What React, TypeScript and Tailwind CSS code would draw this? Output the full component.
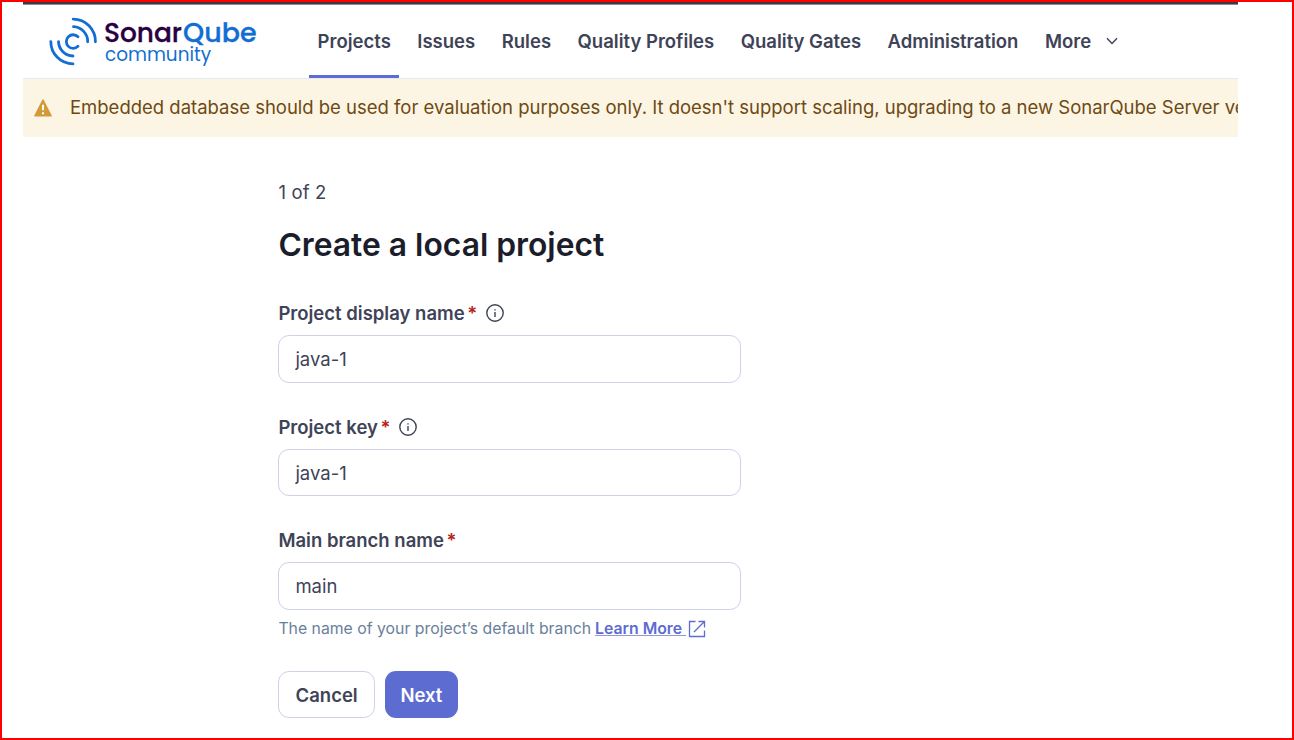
import type { ReactNode } from "react";

const navItems = ["Projects", "Issues", "Rules", "Quality Profiles", "Quality Gates", "Administration"];

function Logo() {
  return (
    <svg className="ml-[26px] mt-[7px] h-[62px] w-[210px] shrink-0 overflow-visible" viewBox="49 12 210 62" fill="none">
      <g stroke="#126ed3" strokeWidth="2.8" strokeLinecap="round">
        <path d="M78 36.8A6.8 6.8 0 1 0 78 46.3" />
        <path d="M73.5 26.7A14.9 14.9 0 0 1 87.7 41.8" />
        <path d="M73.2 19.1A22.4 22.4 0 0 1 95.4 41.8" />
        <path d="M58.5 41.6A14.9 14.9 0 0 0 73 56" />
        <path d="M50.8 41.6A22.2 22.2 0 0 0 73 63.9" />
      </g>
      <g fontFamily="Poppins, Inter, sans-serif">
        <text x="104" y="42.4" fontSize="26" fontWeight="500" fill="#290042" stroke="#290042" strokeWidth="0.3" textLength="78" lengthAdjust="spacingAndGlyphs">Sonar</text>
        <text x="183" y="42.4" fontSize="26" fontWeight="500" fill="#126ed3" stroke="#126ed3" strokeWidth="0.3" textLength="73.5" lengthAdjust="spacingAndGlyphs">Qube</text>
        <text x="105" y="60.5" fontSize="19" fill="#126ed3" textLength="106" lengthAdjust="spacingAndGlyphs">community</text>
      </g>
    </svg>
  );
}

function InfoIcon() {
  return (
    <svg className="ml-[9px] size-[18px]" viewBox="0 0 18 18" fill="none" stroke="#3e4357" strokeWidth="1.4">
      <circle cx="9" cy="9" r="8.2" />
      <path d="M9 8v5" />
      <path d="M9 5.2v1.4" />
    </svg>
  );
}

function Field({ label, value, info, children }: { label: string; value: string; info?: boolean; children?: ReactNode }) {
  return (
    <div className="flex flex-col">
      <label className="flex h-6 items-center font-semibold">
        <span>{label}</span>
        <span className="ml-[2.5px] text-[#b42318]">*</span>
        {info && <InfoIcon />}
      </label>
      <input
        className="mt-[10px] h-[47.5px] w-[462.6px] rounded-[11px] border border-[#ced2e8] bg-white px-4 outline-none"
        defaultValue={value}
      />
      {children}
    </div>
  );
}

export default function App() {
  return (
    <div className="h-[740px] w-[1294px] overflow-hidden border-2 border-[#ff0000] bg-white font-['Inter',sans-serif] text-[18.5px] leading-6 text-[#3e4357]">
      <div className="ml-[21px] flex w-[1215px] flex-col">
        <div className="h-[3px] border-b border-[#8c8c8c] bg-[#3c3c3c]" />
        <header className="flex h-[73.5px] border-b border-[#e6e9f0]">
          <Logo />
          <nav className="ml-[50.3px] flex gap-[10.5px] font-semibold">
            {navItems.map((item, i) => (
              <a
                key={item}
                className={
                  i === 0
                    ? "flex h-[73px] items-center border-b-[3px] border-[#5d6cd0] pr-[8px] pl-[8.3px] pt-[2px] whitespace-nowrap"
                    : "flex h-[73px] items-center border-b-[3px] border-transparent px-2 pt-[2px] whitespace-nowrap"
                }
              >
                {item}
              </a>
            ))}
            <a className="flex h-[73px] items-center border-b-[3px] border-transparent px-2 pt-[2px]">
              More
              <svg className="ml-[15px] h-[8px] w-[12px]" viewBox="0 0 12 8" fill="none" stroke="#3e4357" strokeWidth="1.4">
                <path d="M1 1.2 6 6.4 11 1.2" />
              </svg>
            </a>
          </nav>
        </header>
        <div className="flex h-[58px] items-center overflow-hidden bg-[#fcf5e4] text-[#6e4a13]">
          <svg className="ml-[11px] h-[18px] w-[18px] shrink-0" viewBox="0 0 18 18">
            <path d="M9 1.2 17 16.8H1Z" fill="#d29a39" stroke="#d29a39" strokeWidth="1.6" strokeLinejoin="round" />
            <path d="M9 5.8v5.5M9 13.2v2" stroke="#fff" strokeWidth="2" />
          </svg>
          <p className="-mt-px ml-[18px] whitespace-nowrap tracking-[-0.01px]">
            Embedded database should be used for evaluation purposes only. It doesn't support scaling, upgrading to a new SonarQube Server version
          </p>
        </div>
      </div>

      <main className="ml-[276.4px] flex flex-col pt-[43.3px]">
        <p className="tracking-[0.15px]">1 of 2</p>
        <h1 className="mt-[20.5px] text-[31.8px] leading-[42px] font-semibold text-[#1b1d2b]">Create a local project</h1>
        <form className="mt-[35px] flex flex-col gap-[32px]">
          <Field label="Project display name" value="java-1" info />
          <Field label="Project key" value="java-1" info />
          <Field label="Main branch name" value="main">
            <p className="mt-[7px] flex items-center text-[15.8px] text-[#69809b]">
              <span>The name of your project’s default branch</span>
              <a className="ml-[4px] flex items-center font-semibold text-[#5d6cd0]">
                <span className="whitespace-pre underline decoration-[#8f99df]">Learn More </span>
                <svg className="ml-[1.5px] size-[18px]" viewBox="0 0 18 18" fill="none" stroke="#5d6cd0" strokeWidth="1.3">
                  <path d="M7.5 1.5H1.5V16.5H16.5V10.5M10.5 1.5H16.5V7.5M16.5 1.5 6 12" />
                </svg>
              </a>
            </p>
          </Field>
        </form>
        <div className="mt-[30px] flex gap-[10px] font-semibold">
          <button className="h-[47.5px] w-[96.5px] rounded-[11px] border border-[#ced2e8] bg-white">Cancel</button>
          <button className="h-[47.5px] w-[73px] rounded-[11px] bg-[#5d6cd0] text-white">Next</button>
        </div>
      </main>
    </div>
  );
}
